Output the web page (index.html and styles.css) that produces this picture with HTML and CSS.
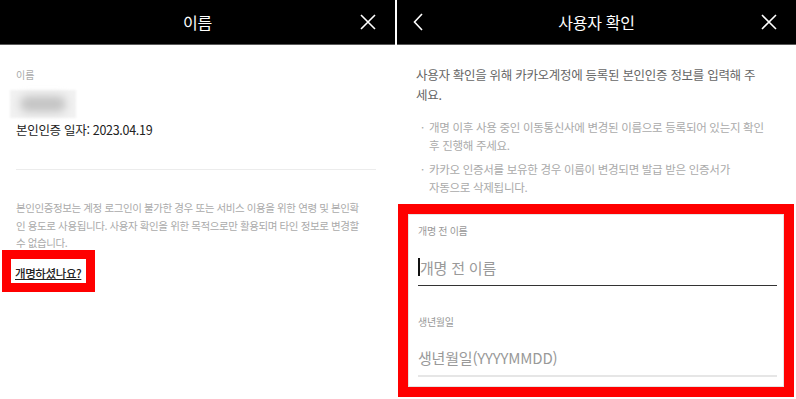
FILE: index.html
```html
<!DOCTYPE html>
<html lang="ko">
<head>
<meta charset="utf-8">
<title>이름 / 사용자 확인</title>
<link rel="stylesheet" href="styles.css">
</head>
<body>
<div class="screens">
  <section class="panel panel-left">
    <header class="topbar">
      <div class="topbar-side"></div>
      <h1 class="topbar-title">이름</h1>
      <div class="topbar-side topbar-right">
        <svg class="icon-close" width="16" height="16" viewBox="0 0 16 16"><path d="M1 1 L15 15 M15 1 L1 15" stroke="#fff" stroke-width="1.6" fill="none"/></svg>
      </div>
    </header>
    <div class="content-left">
      <div class="field-label">이름</div>
      <div class="blur-box"><div class="blur-blob"></div></div>
      <div class="auth-date">본인인증 일자: 2023.04.19</div>
      <div class="divider"></div>
      <p class="notice">본인인증정보는 계정 로그인이 불가한 경우 또는 서비스 이용을 위한 연령 및 본인확<br>인 용도로 사용됩니다. 사용자 확인을 위한 목적으로만 활용되며 타인 정보로 변경할<br>수 없습니다.</p>
      <div class="highlight highlight-link"><a class="rename-link" href="#">개명하셨나요?</a></div>
    </div>
  </section>
  <section class="panel panel-right">
    <header class="topbar">
      <div class="topbar-side topbar-left">
        <svg class="icon-back" width="10" height="18" viewBox="0 0 10 18"><path d="M9 1 L1.5 9 L9 17" stroke="#fff" stroke-width="1.6" fill="none"/></svg>
      </div>
      <h1 class="topbar-title">사용자 확인</h1>
      <div class="topbar-side topbar-right">
        <svg class="icon-close" width="16" height="16" viewBox="0 0 16 16"><path d="M1 1 L15 15 M15 1 L1 15" stroke="#fff" stroke-width="1.6" fill="none"/></svg>
      </div>
    </header>
    <div class="content-right">
      <p class="intro">사용자 확인을 위해 카카오계정에 등록된 본인인증 정보를 입력해 주<br>세요.</p>
      <ul class="bullets">
        <li>개명 이후 사용 중인 이동통신사에 변경된 이름으로 등록되어 있는지 확인<br>후 진행해 주세요.</li>
        <li>카카오 인증서를 보유한 경우 이름이 변경되면 발급 받은 인증서가<br>자동으로 삭제됩니다.</li>
      </ul>
      <div class="highlight highlight-form">
        <div class="form-inner">
          <div class="form-label">개명 전 이름</div>
          <div class="form-input active"><span class="caret"></span><span class="placeholder">개명 전 이름</span></div>
          <div class="form-label form-label-2">생년월일</div>
          <div class="form-input"><span class="placeholder">생년월일(YYYYMMDD)</span></div>
        </div>
      </div>
    </div>
  </section>
</div>
</body>
</html>
```
FILE: styles.css
```css
* { box-sizing: border-box; }
html, body { margin: 0; padding: 0; background: #fff; }
body {
  font-family: "Noto Sans CJK KR", "Noto Sans", sans-serif;
  color: #222;
  width: 796px;
  height: 399px;
  overflow: hidden;
}
.screens {
  display: flex;
  gap: 2px;
  height: 399px;
}
.panel { background: #fff; }
.panel-left { width: 395px; flex: none; }
.panel-right { flex: 1; }

.topbar {
  height: 45px;
  background: #000;
  border-bottom: 1px solid #5a5a5a;
  display: grid;
  grid-template-columns: 1fr auto 1fr;
  align-items: center;
}
.topbar-title {
  margin: 0;
  color: #fff;
  font-weight: 400;
  font-size: 16px;
  line-height: 44px;
  letter-spacing: -0.3px;
}
.topbar-side { display: flex; align-items: center; height: 44px; }
.topbar-right { justify-content: flex-end; padding-right: 19px; }
.topbar-left { padding-left: 16px; }
.icon-close, .icon-back { display: block; }

/* left */
.content-left { padding: 23px 19px 0 16px; }
.field-label {
  font-size: 10px;
  line-height: 14px;
  color: #aaa;
}
.blur-box {
  margin: 8px 0 3px -6px;
  width: 66px;
  height: 28px;
  background: #f1f1f1;
  filter: blur(1px);
  display: flex;
  align-items: center;
  justify-content: center;
}
.blur-blob {
  width: 46px;
  height: 16px;
  border-radius: 10px;
  background: #c4c4c4;
  filter: blur(4px);
}
.auth-date {
  font-size: 12.5px;
  line-height: 18px;
  color: #222;
  letter-spacing: -0.3px;
}
.divider {
  height: 1px;
  background: #ececec;
  margin-top: 30px;
}
.notice {
  margin: 29px 0 0;
  font-size: 10.5px;
  line-height: 17.5px;
  color: #aaa;
  letter-spacing: -0.4px;
  white-space: nowrap;
}
.highlight { border: 9px solid #f00; background: #fff; }
.highlight-link {
  width: max-content;
  margin: -2px 0 0 -14px;
  padding: 0 5px 0 4px;
  height: 42px;
  line-height: 24px;
}
.rename-link {
  color: #222;
  font-size: 11.5px;
  font-weight: 500;
  text-decoration: underline;
  letter-spacing: -0.4px;
}

/* right */
.content-right { padding: 20px 0 0; }
.intro {
  margin: 0 0 13px;
  padding-left: 19px;
  font-size: 12.5px;
  line-height: 20px;
  color: #666;
  letter-spacing: -0.3px;
  white-space: nowrap;
}
.bullets {
  list-style: none;
  margin: 0;
  padding: 0 0 0 32px;
  font-size: 11.5px;
  line-height: 18px;
  color: #aaa;
  letter-spacing: -0.3px;
  white-space: nowrap;
}
.bullets li { position: relative; margin-bottom: 6px; }
.bullets li:last-child { margin-bottom: 0; }
.bullets li::before {
  content: "·";
  position: absolute;
  left: -8px;
  top: 0;
}
.highlight-form {
  margin: 8px 2px 0 1px;
  border-width: 10px;
}
.form-inner {
  border: 1px solid #e4e4e4;
  padding: 9px 6px 9px 9px;
}
.form-label {
  font-size: 10px;
  line-height: 14px;
  color: #999;
  letter-spacing: -0.3px;
}
.form-label-2 { margin-top: 29px; }
.form-input {
  margin-top: 8px;
  height: 40px;
  display: flex;
  align-items: center;
  padding-top: 3px;
  border-bottom: 2px solid #e6e6e6;
  font-size: 15px;
  color: #999;
}
.form-input.active { border-bottom: 1.5px solid #333; }
.caret {
  width: 2px;
  height: 18px;
  background: #111;
}
.placeholder { letter-spacing: -0.2px; }
```
